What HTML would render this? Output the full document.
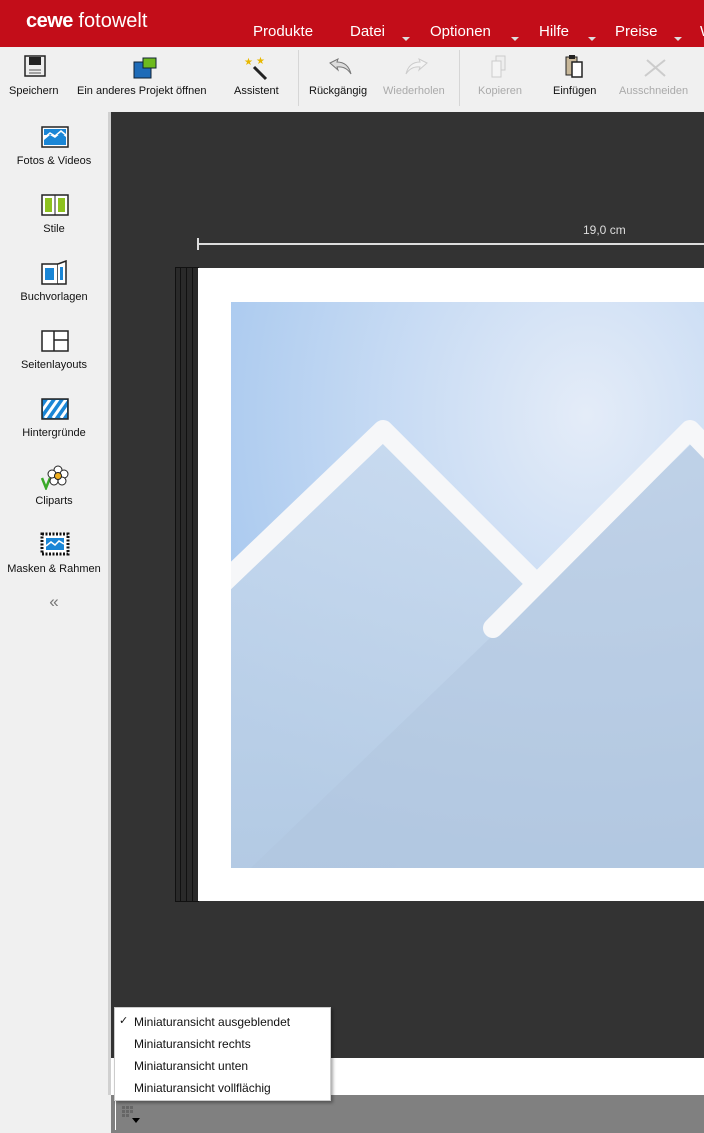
<!DOCTYPE html>
<html><head><meta charset="utf-8"><style>
*{margin:0;padding:0;box-sizing:border-box}
body{width:704px;height:1133px;overflow:hidden;position:relative;font-family:"Liberation Sans",sans-serif;background:#f0f0f0}
.top{position:absolute;left:0;top:0;width:704px;height:47px;background:#c30d19;color:#fff}
.logo{position:absolute;left:26px;top:10px;font-size:20px}
.menu{position:absolute;top:23px;font-size:15px}
.car{position:absolute;top:37px;width:0;height:0;border-left:4px solid transparent;border-right:4px solid transparent;border-top:4px solid #ddd}
.tb{position:absolute;top:47px;left:0;width:704px;height:65px;background:#f0f0f0}
.tl{position:absolute;top:85px;font-size:11px;color:#111;white-space:nowrap}
.dis{color:#aaa}
.sep{position:absolute;top:50px;width:1px;height:56px;background:#d6d6d6}
.side{position:absolute;left:0;top:112px;width:108px;height:1021px;background:#f0f0f0}
.sl{position:absolute;width:108px;text-align:center;font-size:11px;color:#111}
.canvas{position:absolute;left:111px;top:112px;width:593px;height:946px;background:#333}
.vb{position:absolute;left:108px;top:112px;width:3px;height:983px;background:#d0d0d0}
.mi{position:absolute;left:134px;font-size:12px;color:#111}
</style></head><body>
<div class="top">
<div class="logo"><b style="letter-spacing:-0.5px">cewe</b> fotowelt</div>
<div class="menu" style="left:253px">Produkte</div>
<div class="menu" style="left:350px">Datei</div><div class="car" style="left:402px"></div>
<div class="menu" style="left:430px">Optionen</div><div class="car" style="left:511px"></div>
<div class="menu" style="left:539px">Hilfe</div><div class="car" style="left:588px"></div>
<div class="menu" style="left:615px">Preise</div><div class="car" style="left:674px"></div>
<div class="menu" style="left:700px">W</div>
</div>
<div class="tb"></div>
<svg style="position:absolute;left:24px;top:55px" width="22" height="22"><rect x="1" y="1" width="20" height="20" fill="#eee" stroke="#222" stroke-width="1.5"/><rect x="5" y="2" width="12" height="8" fill="#222"/><line x1="5" y1="15" x2="17" y2="15" stroke="#555"/><line x1="5" y1="18" x2="17" y2="18" stroke="#555"/></svg>
<svg style="position:absolute;left:133px;top:57px" width="24" height="22"><rect x="1" y="5" width="17" height="16" fill="#1e6bb8" stroke="#123"/><rect x="10" y="1" width="13" height="10" fill="#6dba1e" stroke="#123"/></svg>
<svg style="position:absolute;left:244px;top:55px" width="26" height="26"><text x="0" y="10" font-size="10" fill="#e8b800">★</text><text x="12" y="9" font-size="10" fill="#e8b800">★</text><line x1="10" y1="12" x2="22" y2="24" stroke="#222" stroke-width="3"/></svg>
<svg style="position:absolute;left:326px;top:57px" width="28" height="20"><path d="M4 6 L12 2 L11 5 Q22 5 25 17 Q20 9 11 10 L12 13 Z" fill="#ddd" stroke="#777"/></svg>
<svg style="position:absolute;left:403px;top:57px" width="28" height="20"><path d="M24 6 L16 2 L17 5 Q6 5 3 17 Q8 9 17 10 L16 13 Z" fill="#f4f4f4" stroke="#ccc"/></svg>
<svg style="position:absolute;left:491px;top:55px" width="20" height="24"><rect x="5" y="1" width="9" height="14" fill="#eee" stroke="#ccc"/><rect x="1" y="6" width="9" height="16" fill="#f4f4f4" stroke="#ccc"/></svg>
<svg style="position:absolute;left:565px;top:54px" width="20" height="26"><rect x="1" y="3" width="11" height="18" fill="#c8b89a" stroke="#222"/><rect x="4" y="1" width="6" height="4" fill="#222"/><rect x="7" y="8" width="10" height="15" fill="#fff" stroke="#222" stroke-width="1.5"/></svg>
<svg style="position:absolute;left:643px;top:56px" width="26" height="22"><path d="M2 20 L22 4 M4 4 L22 20" stroke="#ccc" stroke-width="2" fill="none"/></svg>
<div class="tl" style="left:9px">Speichern</div>
<div class="tl" style="left:77px">Ein anderes Projekt öffnen</div>
<div class="tl" style="left:234px">Assistent</div>
<div class="sep" style="left:298px"></div>
<div class="tl" style="left:309px">Rückgängig</div>
<div class="tl dis" style="left:383px">Wiederholen</div>
<div class="sep" style="left:459px"></div>
<div class="tl dis" style="left:478px">Kopieren</div>
<div class="tl" style="left:553px">Einfügen</div>
<div class="tl dis" style="left:619px">Ausschneiden</div>

<div class="side"></div>
<div class="vb"></div>
<svg style="position:absolute;left:41px;top:126px" width="28" height="22"><rect x="1" y="1" width="26" height="20" fill="#fff" stroke="#222" stroke-width="1.5"/><path d="M3 14 L9 9 L14 12 L20 7 L25 11 L25 19 L3 19Z" fill="#1a86d6"/><rect x="3" y="3" width="22" height="6" fill="#1a86d6"/><path d="M3 12 L9 7 L14 10 L20 5 L25 9" stroke="#fff" stroke-width="1.5" fill="none"/></svg>
<div class="sl" style="top:155px">Fotos &amp; Videos</div>
<svg style="position:absolute;left:41px;top:194px" width="28" height="22"><rect x="1" y="1" width="26" height="20" fill="#fff" stroke="#222" stroke-width="1.5"/><line x1="14" y1="1" x2="14" y2="21" stroke="#222"/><rect x="4" y="4" width="7" height="14" fill="#8dc21f"/><rect x="17" y="4" width="7" height="14" fill="#8dc21f"/></svg>
<div class="sl" style="top:223px">Stile</div>
<svg style="position:absolute;left:41px;top:260px" width="28" height="26"><rect x="1" y="4" width="16" height="20" fill="#fff" stroke="#222" stroke-width="1.5"/><path d="M17 4 L25 1 L25 24 L17 24" fill="#fff" stroke="#222" stroke-width="1.5"/><rect x="4" y="8" width="9" height="12" fill="#1a86d6"/><rect x="19" y="7" width="3" height="13" fill="#1a86d6"/></svg>
<div class="sl" style="top:291px">Buchvorlagen</div>
<svg style="position:absolute;left:41px;top:330px" width="28" height="22"><rect x="1" y="1" width="26" height="20" fill="#fff" stroke="#222" stroke-width="1.5"/><line x1="13" y1="1" x2="13" y2="21" stroke="#222" stroke-width="1.5"/><line x1="13" y1="10" x2="27" y2="10" stroke="#222" stroke-width="1.5"/></svg>
<div class="sl" style="top:359px">Seitenlayouts</div>
<svg style="position:absolute;left:41px;top:398px" width="28" height="22"><defs><clipPath id="c"><rect x="2" y="2" width="24" height="18"/></clipPath></defs><rect x="1" y="1" width="26" height="20" fill="#1a86d6" stroke="#222" stroke-width="1.5"/><g clip-path="url(#c)" stroke="#fff" stroke-width="3"><line x1="-4" y1="20" x2="10" y2="0"/><line x1="4" y1="20" x2="18" y2="0"/><line x1="12" y1="20" x2="26" y2="0"/><line x1="20" y1="20" x2="34" y2="0"/></g></svg>
<div class="sl" style="top:427px">Hintergründe</div>
<svg style="position:absolute;left:40px;top:464px" width="30" height="26"><path d="M2 14 L6 24 L10 14" stroke="#3bab2a" stroke-width="2.5" fill="none"/><g fill="#fff" stroke="#222"><circle cx="18" cy="6" r="4"/><circle cx="24" cy="10" r="4"/><circle cx="22" cy="17" r="4"/><circle cx="14" cy="17" r="4"/><circle cx="12" cy="10" r="4"/></g><circle cx="18" cy="12" r="3.5" fill="#f0b020" stroke="#222"/></svg>
<div class="sl" style="top:495px">Cliparts</div>
<svg style="position:absolute;left:40px;top:532px" width="30" height="24"><rect x="2" y="2" width="26" height="20" fill="#fff" stroke="#111" stroke-width="3" stroke-dasharray="2 1.5"/><rect x="6" y="6" width="18" height="12" fill="#1a86d6"/><path d="M6 14 L11 10 L15 13 L19 9 L24 12" stroke="#fff" stroke-width="1.5" fill="none"/></svg>
<div class="sl" style="top:563px">Masken &amp; Rahmen</div>
<div class="sl" style="top:592px;font-size:17px;color:#777">«</div>

<div class="canvas"></div>
<div style="position:absolute;left:198px;top:243px;width:506px;height:2px;background:#ddd"></div>
<div style="position:absolute;left:197px;top:238px;width:2px;height:12px;background:#ddd"></div>
<div style="position:absolute;left:583px;top:223px;font-size:12px;color:#ddd">19,0 cm</div>
<div style="position:absolute;left:175px;top:267px;width:24px;height:635px;background:#2a2a2a;border:1px solid #111"></div>
<div style="position:absolute;left:180px;top:268px;width:1px;height:633px;background:#111"></div>
<div style="position:absolute;left:186px;top:268px;width:1px;height:633px;background:#111"></div>
<div style="position:absolute;left:192px;top:268px;width:1px;height:633px;background:#111"></div>
<div style="position:absolute;left:198px;top:268px;width:506px;height:633px;background:#fff"></div>
<svg style="position:absolute;left:231px;top:302px" width="473" height="566">
<defs><radialGradient id="g" cx="0.75" cy="0.2" r="0.9"><stop offset="0" stop-color="#e4ecf8"/><stop offset="1" stop-color="#a4c6ee"/></radialGradient><linearGradient id="g2" x1="0" y1="0" x2="0" y2="1"><stop offset="0" stop-color="#c8daef"/><stop offset="1" stop-color="#b6cbe2"/></linearGradient></defs>
<rect width="473" height="566" fill="url(#g)"/>
<path d="M0 283 L152 133 L300 280 L460 130 L473 140 L473 566 L0 566Z" fill="url(#g2)" opacity="0.85"/>
<path d="M20 566 L473 130 L473 566Z" fill="#b0c4dc" opacity="0.4"/>
<path d="M-10 283 L152 128 L300 276" stroke="#f6f7f9" stroke-width="20" fill="none" stroke-linecap="round" stroke-linejoin="round"/>
<path d="M262 326 L459 128 L490 160" stroke="#f6f7f9" stroke-width="20" fill="none" stroke-linecap="round" stroke-linejoin="round"/>
</svg>
<div style="position:absolute;left:111px;top:1058px;width:593px;height:37px;background:#fff"></div>
<div style="position:absolute;left:111px;top:1095px;width:593px;height:38px;background:#808080"></div>
<div style="position:absolute;left:115px;top:1097px;width:1px;height:33px;background:#fff"></div>
<svg style="position:absolute;left:122px;top:1106px" width="26" height="27"><g fill="#666"><rect x="0" y="0" width="3" height="3"/><rect x="4" y="0" width="3" height="3"/><rect x="8" y="0" width="3" height="3"/><rect x="0" y="4" width="3" height="3"/><rect x="4" y="4" width="3" height="3"/><rect x="8" y="4" width="3" height="3"/><rect x="0" y="8" width="3" height="3"/><rect x="4" y="8" width="3" height="3"/></g><path d="M10 12 L18 12 L14 17Z" fill="#000"/></svg>
<div style="position:absolute;left:114px;top:1007px;width:217px;height:94px;background:#fff;border:1px solid #ccc;box-shadow:2px 2px 3px rgba(0,0,0,0.35)"></div>
<div style="position:absolute;left:119px;top:1014px;font-size:11px;color:#111">✓</div>
<div class="mi" style="top:1015px">Miniaturansicht ausgeblendet</div>
<div class="mi" style="top:1037px">Miniaturansicht rechts</div>
<div class="mi" style="top:1059px">Miniaturansicht unten</div>
<div class="mi" style="top:1081px">Miniaturansicht vollflächig</div>
</body></html>
